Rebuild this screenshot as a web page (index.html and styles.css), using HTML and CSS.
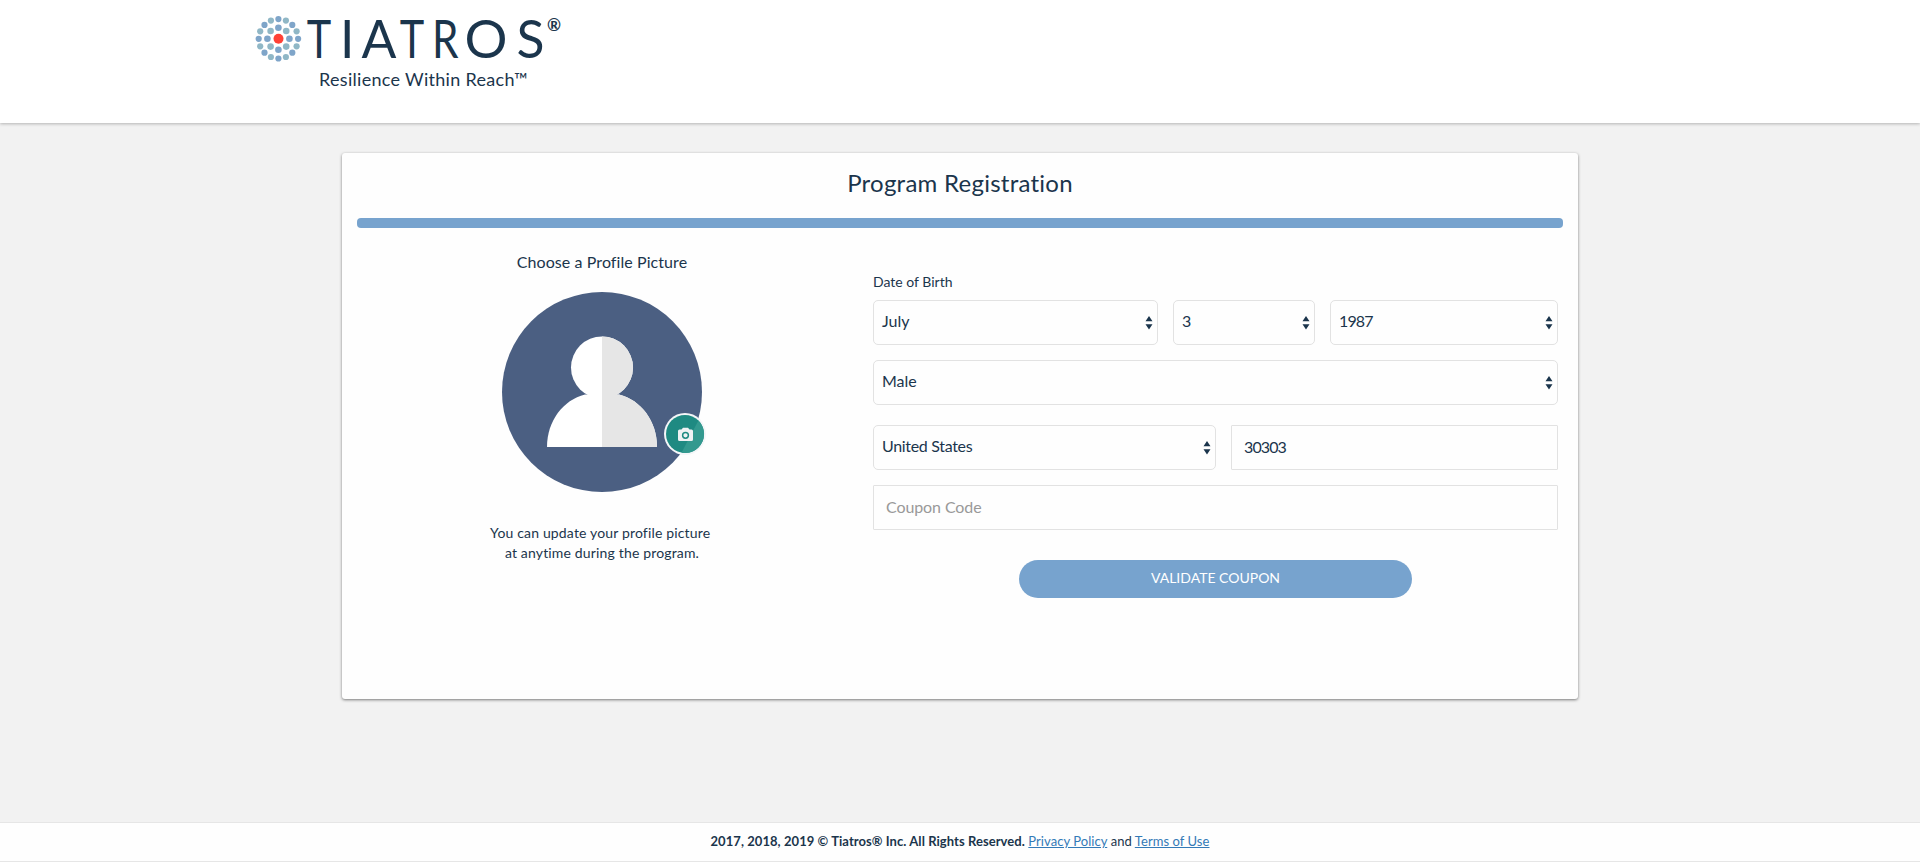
FILE: index.html
```html
<!DOCTYPE html>
<html lang="en">
<head>
<meta charset="utf-8">
<title>Program Registration</title>
<link rel="stylesheet" href="styles.css">
</head>
<body>
<header class="site-header">
  <svg class="logo" width="330" height="72" viewBox="0 0 330 72" role="img" aria-label="Tiatros">
    <g fill="#7fa5c9">
      <circle cx="38.400" cy="19.100" r="3.100"/><circle cx="52.300" cy="24.900" r="3.100"/><circle cx="58.100" cy="38.800" r="3.100"/><circle cx="52.300" cy="52.700" r="3.100"/>
      <circle cx="38.400" cy="58.500" r="3.100"/><circle cx="24.500" cy="52.700" r="3.100"/><circle cx="18.700" cy="38.800" r="3.100"/><circle cx="24.500" cy="24.900" r="3.100"/>
      <circle cx="38.400" cy="27.800" r="3.300"/><circle cx="49.400" cy="38.800" r="3.300"/><circle cx="38.400" cy="49.800" r="3.300"/><circle cx="27.400" cy="38.800" r="3.300"/>
    </g>
    <g fill="#90b7c6">
      <circle cx="45.900" cy="20.600" r="3.100"/><circle cx="56.600" cy="31.300" r="3.100"/><circle cx="56.600" cy="46.300" r="3.100"/><circle cx="45.900" cy="57" r="3.100"/>
      <circle cx="30.900" cy="57" r="3.100"/><circle cx="20.200" cy="46.300" r="3.100"/><circle cx="20.200" cy="31.300" r="3.100"/><circle cx="30.900" cy="20.600" r="3.100"/>
      <circle cx="46.200" cy="31" r="3.300"/><circle cx="46.200" cy="46.600" r="3.300"/><circle cx="30.600" cy="46.600" r="3.300"/><circle cx="30.600" cy="31" r="3.300"/>
    </g>
    <circle cx="38.500" cy="38.700" r="5" fill="#ff4136"/>
    <text class="wordmark" y="58"><tspan x="66.700" textLength="24.500" lengthAdjust="spacingAndGlyphs">T</tspan><tspan x="100">I</tspan><tspan x="121.500">A</tspan><tspan x="159.800" textLength="24.500" lengthAdjust="spacingAndGlyphs">T</tspan><tspan x="192" textLength="26.500" lengthAdjust="spacingAndGlyphs">R</tspan><tspan x="224.500" textLength="43" lengthAdjust="spacingAndGlyphs">O</tspan><tspan x="276.500">S</tspan></text>
    <text class="registered" x="307" y="31">®</text>
  </svg>
  <p class="tagline">Resilience Within Reach™</p>
</header>
<main class="card">
  <h1 class="card-title">Program Registration</h1>
  <div class="progress"></div>
  <div class="columns">
    <section class="profile">
      <h2 class="profile-title">Choose a Profile Picture</h2>
      <div class="avatar">
        <svg width="200" height="200" viewBox="0 0 200 200">
          <circle cx="100" cy="100" r="100" fill="#4b5f82"/>
          <g fill="#fff"><circle cx="100" cy="75.500" r="31"/><path d="M45 155c0-26 16-47 38-52.500h34c22 5.500 38 26.500 38 52.500z"/></g>
          <g fill="#e6e6e6"><path d="M100 44.500a31 31 0 0 1 0 62z"/><path d="M100 102.500h17c22 5.500 38 26.500 38 52.500h-55z"/></g>
        </svg>
        <svg class="camera" width="42" height="42" viewBox="0 0 42 42">
          <circle cx="21" cy="21" r="21" fill="#f4f6f8"/>
          <circle cx="21" cy="21" r="19" fill="#1f8a82"/>
          <path d="M34.400 7.500A19 19 0 0 1 17.500 39.700z" fill="#33998f"/>
          <path d="M15.500 16.500h2l1.500-1.700h5l1.500 1.700h2q1.500 0 1.500 1.500v8.500q0 1.500-1.500 1.500h-12q-1.500 0-1.500-1.500v-8.500q0-1.500 1.500-1.500z" fill="#f0f2f4"/>
          <circle cx="21.500" cy="22.300" r="2.900" fill="none" stroke="#1f8a82" stroke-width="1.500"/>
        </svg>
      </div>
      <p class="profile-note">You can update your profile picture&nbsp;<br>at anytime during the program.</p>
    </section>
    <form class="form">
      <label class="label">Date of Birth</label>
      <div class="row date">
        <div class="select">July<svg class="arrows" viewBox="0 0 8 14"><path d="M4 0L7.500 5.300H.500zM4 13.500L7.500 8.300H.500z"/></svg></div>
        <div class="select digits">3<svg class="arrows" viewBox="0 0 8 14"><path d="M4 0L7.500 5.300H.500zM4 13.500L7.500 8.300H.500z"/></svg></div>
        <div class="select digits">1987<svg class="arrows" viewBox="0 0 8 14"><path d="M4 0L7.500 5.300H.500zM4 13.500L7.500 8.300H.500z"/></svg></div>
      </div>
      <div class="row"><div class="select">Male<svg class="arrows" viewBox="0 0 8 14"><path d="M4 0L7.500 5.300H.500zM4 13.500L7.500 8.300H.500z"/></svg></div></div>
      <div class="row place">
        <div class="select country">United States<svg class="arrows" viewBox="0 0 8 14"><path d="M4 0L7.500 5.300H.500zM4 13.500L7.500 8.300H.500z"/></svg></div>
        <div class="input digits">30303</div>
      </div>
      <div class="row"><div class="input placeholder">Coupon Code</div></div>
      <button type="button" class="submit">VALIDATE COUPON</button>
    </form>
  </div>
</main>
<footer class="site-footer"><strong>2017, 2018, 2019 © Tiatros® Inc. All Rights Reserved.</strong> <a href="#">Privacy Policy</a> and <a href="#">Terms of Use</a></footer>
</body>
</html>
```

FILE: styles.css
```css
* { box-sizing: border-box; }
body { margin: 0; height: 862px; display: flex; flex-direction: column; background: #f2f2f2; color: #1b354c; font-family: Lato, "Open Sans", sans-serif; font-variant-ligatures: none; overflow: hidden; }
h1, h2, p { margin: 0; font-weight: 400; }
.site-header { height: 123px; flex: none; background: #fff; padding-left: 240px; box-shadow: 0 1px 3px rgba(0,0,0,.26); }
.logo { display: block; }
.wordmark { font-size: 51.600px; fill: #1b354c; }
.registered { font-size: 17px; font-weight: 700; fill: #1b354c; }
.tagline { margin-top: -8px; padding-left: 79px; font-size: 18px; line-height: 31px; letter-spacing: .300px; }
.card { width: 1236px; height: 546px; flex: none; margin: 30px auto 0; padding: 0 15px; background: #fefefe; border-radius: 3px; box-shadow: 0 1px 3px rgba(0,0,0,.5); }
.card-title { height: 65px; line-height: 60px; text-align: center; font-size: 24px; letter-spacing: .250px; }
.progress { height: 10px; border-radius: 4px; background: #77a3ce; }
.columns { display: flex; }
.profile { width: 490px; text-align: center; }
.profile-title { font-size: 16px; line-height: 20px; padding-top: 24px; letter-spacing: .080px; }
.avatar { position: relative; width: 200px; height: 200px; margin: 20px auto 0; }
.camera { position: absolute; left: 162px; top: 121px; }
.profile-note { margin-top: 31px; font-size: 14px; line-height: 20px; letter-spacing: .160px; }
.form { width: 685px; margin-left: 26px; padding-top: 44px; display: flex; flex-direction: column; }
.label { font-size: 14px; line-height: 20px; margin-bottom: 8px; }
.row { display: grid; gap: 15px; margin-bottom: 15px; }
.date { grid-template-columns: 285px 142px 228px; }
.place { grid-template-columns: 343px 327px; margin-top: 5px; }
.select, .input { height: 45px; border: 1px solid #e2e2e2; font-size: 16px; }
.select { position: relative; line-height: 40px; border-radius: 5px; padding-left: 8px; }
.input { line-height: 42px; border-radius: 1px; padding-left: 12px; }
.digits { letter-spacing: -.9px; }
.country { letter-spacing: -.320px; }
.arrows { position: absolute; right: 4px; top: 15px; width: 8px; height: 14px; fill: #1b354c; }
.placeholder { color: #999; letter-spacing: -.100px; }
.submit { width: 393px; height: 38px; margin: 15px 0 0 146px; padding: 0 0 3px; border: 0; border-radius: 19px; background: #77a3ce; color: #fff; font: 14px Lato, sans-serif; }
.site-footer { margin-top: 123px; height: 40px; flex: none; border: solid #e6e6e6; border-width: 1px 0; background: #fefefe; text-align: center; font-size: 13px; line-height: 37px; letter-spacing: .060px; }
.site-footer a { color: #337ab7; }
```
